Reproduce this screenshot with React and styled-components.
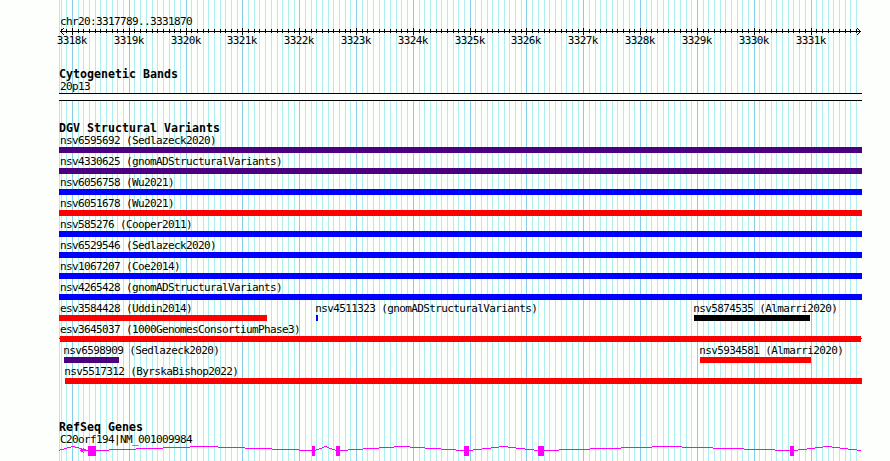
import React from 'react';
import styled, { createGlobalStyle } from 'styled-components';

const GlobalStyle = createGlobalStyle`
  body {
    margin: 0;
    background: #fdfffc;
    overflow: hidden;
  }
`;

const START = 3317789;
const END = 3331870;
const LEFT = 59;
const WIDTH = 803;

const toX = (pos) => Math.round(60 + ((pos - START) * 800) / (END - START + 1)) - LEFT;

const INDIGO = '#4b0082';
const BLUE = '#0000ff';
const RED = '#ff0000';
const BLACK = '#000000';
const MAGENTA = '#ff00ff';

const Browser = styled.main`
  position: relative;
  width: 890px;
  height: 461px;
  box-sizing: border-box;
  padding: 15px 28px 0 ${LEFT}px;
  background: #fdfffc;
  color: #000;
  overflow: hidden;
`;

const GridLines = styled.svg`
  position: absolute;
  top: 0;
  left: ${LEFT}px;
`;

const Content = styled.div`
  position: relative;
  display: flex;
  flex-direction: column;
`;

const Label = styled.div`
  height: ${props => props.$height || 13}px;
  line-height: 13px;
  padding-left: 1px;
  font-family: 'DejaVu Sans Mono', monospace;
  font-size: 11px;
  letter-spacing: -0.622px;
  white-space: pre;
`;

const Track = styled.section`
  display: flex;
  flex-direction: column;
  margin-top: ${props => props.$gap}px;
`;

const TrackTitle = styled.h2`
  margin: 0;
  height: ${props => props.$height}px;
  line-height: 13px;
  font-family: 'DejaVu Sans Mono', monospace;
  font-size: 11.6px;
  font-weight: bold;
  letter-spacing: 0.016px;
  white-space: pre;
`;

const Drawing = styled.svg`
  display: block;
  overflow: visible;
  font-family: 'DejaVu Sans Mono', monospace;
  font-size: 11px;
  letter-spacing: -0.622px;
`;

const Band = styled.div`
  width: ${WIDTH}px;
  height: 8px;
  box-sizing: border-box;
  border-top: 1px solid #000;
  border-bottom: 1px solid #000;
  background: #fdfffc;
`;

const VariantRow = styled.div`
  display: grid;
  height: 21px;
`;

const Variant = styled.div`
  grid-area: 1 / 1;
  display: flex;
  flex-direction: column;
  padding-left: ${props => props.$start}px;
`;

const VariantLabel = styled(Label)`
  height: 15px;
  line-height: 17px;
  padding-left: 0;
  margin-left: ${props => props.$inset}px;
`;

const Bar = styled.div`
  width: ${props => props.$width}px;
  height: 6px;
  background: ${props => props.$color};
`;

const ClippedBar = styled(Bar)`
  border: solid transparent;
  border-width: 0 1px;
  background:
    linear-gradient(${props => props.$color}, ${props => props.$color}) padding-box,
    linear-gradient(${props => props.$color}, ${props => props.$color}) 0 2px / 100% 1px no-repeat border-box;
`;

const variantRows = [
  [{ name: 'nsv6595692 (Sedlazeck2020)', from: 59, to: 862, color: INDIGO }],
  [{ name: 'nsv4330625 (gnomADStructuralVariants)', from: 59, to: 862, color: INDIGO }],
  [{ name: 'nsv6056758 (Wu2021)', from: 59, to: 862, color: BLUE }],
  [{ name: 'nsv6051678 (Wu2021)', from: 59, to: 862, color: RED }],
  [{ name: 'nsv585276 (Cooper2011)', from: 59, to: 862, color: BLUE }],
  [{ name: 'nsv6529546 (Sedlazeck2020)', from: 59, to: 862, color: BLUE }],
  [{ name: 'nsv1067207 (Coe2014)', from: 59, to: 862, color: BLUE }],
  [{ name: 'nsv4265428 (gnomADStructuralVariants)', from: 59, to: 862, color: BLUE }],
  [
    { name: 'esv3584428 (Uddin2014)', from: 59, to: 267, color: RED },
    { name: 'nsv4511323 (gnomADStructuralVariants)', from: 316, to: 318, color: BLUE },
    { name: 'nsv5874535 (Almarri2020)', from: 694, to: 810, color: BLACK },
  ],
  [{ name: 'esv3645037 (1000GenomesConsortiumPhase3)', from: 59, to: 862, color: RED, clipped: true }],
  [
    { name: 'nsv6598909 (Sedlazeck2020)', from: 64, to: 119, color: INDIGO },
    { name: 'nsv5934581 (Almarri2020)', from: 700, to: 811, color: RED },
  ],
  [{ name: 'nsv5517312 (ByrskaBishop2022)', from: 65, to: 862, color: RED }],
];

const exons = [[88, 96], [312, 315], [336, 340], [464, 469], [538, 544], [790, 794]];
const introns = [[58, 88], [96, 312], [315, 336], [340, 464], [469, 538], [544, 790], [794, 861]];

const ticks = [];
for (let pos = 3317800; pos <= END; pos += 100) {
  ticks.push({ pos, x: toX(pos), major: pos % 1000 === 0 });
}

// Each intron climbs 4px to its midpoint and back, in whole pixel steps
function intronPath([from, to]) {
  const half = (to - from) / 2;
  let d = '';
  for (let x = Math.max(from, LEFT); x < to; x++) {
    const rise = Math.round(4 * (1 - Math.abs(x + 0.5 - from - half) / half));
    d += `M${x - LEFT} ${5 - rise}h1v1h-1z`;
  }
  return d;
}

function Grid() {
  return (
    <GridLines width={WIDTH} height="461" shapeRendering="crispEdges">
      <rect x="0" y="0" width="1" height="461" fill="#afeeee" />
      {ticks.map(({ pos, x, major }) => (
        <rect key={pos} x={x} y="0" width="1" height="461" fill={major ? '#87ceeb' : '#afeeee'} />
      ))}
    </GridLines>
  );
}

function Ruler() {
  return (
    <Drawing width={WIDTH} height="20">
      <g shapeRendering="crispEdges">
        <rect x="1" y="3" width="801" height="1" />
        {ticks.map(({ pos, x, major }) => (
          <rect key={pos} x={x} y={major ? 0 : 1} width="1" height={major ? 7 : 4} />
        ))}
        <path d="M1 3h1v1h-1zM2 2h1v1h-1zM3 1h1v1h-1zM4 0h1v1h-1zM2 4h1v1h-1zM3 5h1v1h-1zM4 6h1v1h-1z" />
        <path d="M801 3h1v1h-1zM800 2h1v1h-1zM799 1h1v1h-1zM798 0h1v1h-1zM800 4h1v1h-1zM799 5h1v1h-1zM798 6h1v1h-1z" />
      </g>
      {ticks.filter(tick => tick.major).map(({ pos, x }) => (
        <text key={pos} x={x - 15.3} y="16">{pos / 1000}k</text>
      ))}
    </Drawing>
  );
}

function Gene() {
  return (
    <Drawing width={WIDTH} height="16" fill={MAGENTA} shapeRendering="crispEdges">
      {introns.map(intron => <path key={intron[0]} d={intronPath(intron)} />)}
      {exons.map(([from, to]) => (
        <rect key={from} x={from - LEFT} y="1" width={to - from} height="10" />
      ))}
      <path d="M21 5h8v1h-8zM22 4h2v1h-2zM24 3h1v1h-1zM22 6h2v1h-2zM24 7h1v1h-1z" />
    </Drawing>
  );
}

function App() {
  return (
    <Browser>
      <GlobalStyle />
      <Grid />
      <Content>
        <Label>chr20:3317789..3331870</Label>
        <Ruler />

        <Track $gap={20}>
          <TrackTitle $height={12}>Cytogenetic Bands</TrackTitle>
          <Label>20p13</Label>
          <Band />
        </Track>

        <Track $gap={21}>
          <TrackTitle $height={10}>DGV Structural Variants</TrackTitle>
          {variantRows.map(row => (
            <VariantRow key={row[0].name}>
              {row.map(({ name, from, to, color, clipped }) => {
                const Shape = clipped ? ClippedBar : Bar;
                return (
                  <Variant key={name} $start={from - LEFT}>
                    <VariantLabel $inset={from === LEFT ? 1 : -0.8}>{name}</VariantLabel>
                    <Shape $width={clipped ? to - from - 2 : to - from} $color={color} />
                  </Variant>
                );
              })}
            </VariantRow>
          ))}
        </Track>

        <Track $gap={37}>
          <TrackTitle $height={12}>RefSeq Genes</TrackTitle>
          <Label $height={12}>C20orf194|NM_001009984</Label>
          <Gene />
        </Track>
      </Content>
    </Browser>
  );
}

export default App;
